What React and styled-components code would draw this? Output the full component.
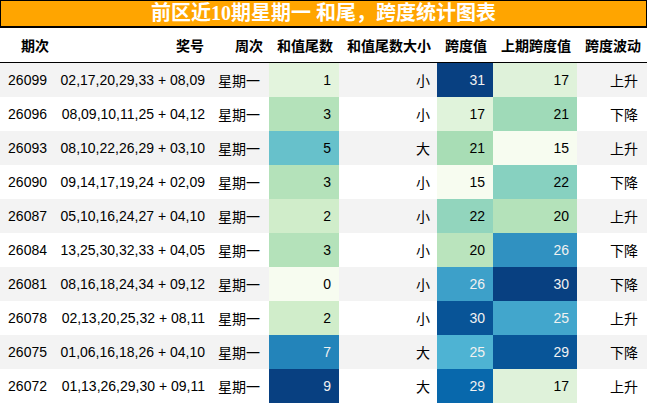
import React from "react";
import styled, { createGlobalStyle } from "styled-components";

const GlobalStyle = createGlobalStyle`
  body {
    margin: 0;
    background: #ffffff;
    font-family: "Liberation Sans", "Noto Sans CJK SC", sans-serif;
  }
`;

// GnBu colormap stops
const GNBU = [
  "#f7fcf0",
  "#e0f3db",
  "#ccebc5",
  "#a8ddb5",
  "#7bccc4",
  "#4eb3d3",
  "#2b8cbe",
  "#0868ac",
  "#084081",
];

const hexToRgb = (h) => [1, 3, 5].map((i) => parseInt(h.slice(i, i + 2), 16));

const gradient = (t) => {
  const x = Math.max(0, Math.min(1, t)) * (GNBU.length - 1);
  const i = Math.min(Math.floor(x), GNBU.length - 2);
  const f = x - i;
  const a = hexToRgb(GNBU[i]);
  const b = hexToRgb(GNBU[i + 1]);
  return a.map((v, k) => Math.round(v + (b[k] - v) * f));
};

const luminance = ([r, g, b]) => {
  const c = [r, g, b].map((v) => {
    v = v / 255;
    return v <= 0.03928 ? v / 12.92 : Math.pow((v + 0.055) / 1.055, 2.4);
  });
  return 0.2126 * c[0] + 0.7152 * c[1] + 0.0722 * c[2];
};

const cellColors = (value, min, max) => {
  const rgb = gradient((value - min) / (max - min));
  return {
    background: `rgb(${rgb.join(",")})`,
    color: luminance(rgb) < 0.408 ? "#f1f1f1" : "#000000",
  };
};

const rows = [
  ["26099", "02,17,20,29,33 + 08,09", 1, "小", 31, 17, "上升"],
  ["26096", "08,09,10,11,25 + 04,12", 3, "小", 17, 21, "下降"],
  ["26093", "08,10,22,26,29 + 03,10", 5, "大", 21, 15, "上升"],
  ["26090", "09,14,17,19,24 + 02,09", 3, "小", 15, 22, "下降"],
  ["26087", "05,10,16,24,27 + 04,10", 2, "小", 22, 20, "上升"],
  ["26084", "13,25,30,32,33 + 04,05", 3, "小", 20, 26, "下降"],
  ["26081", "08,16,18,24,34 + 09,12", 0, "小", 26, 30, "下降"],
  ["26078", "02,13,20,25,32 + 08,11", 2, "小", 30, 25, "上升"],
  ["26075", "01,06,16,18,26 + 04,10", 7, "大", 25, 29, "下降"],
  ["26072", "01,13,26,29,30 + 09,11", 9, "大", 29, 17, "上升"],
];

const headers = ["期次", "奖号", "周次", "和值尾数", "和值尾数大小", "跨度值", "上期跨度值", "跨度波动"];
const widths = [55, 155, 59, 70, 98, 56, 84, 70];

const range = (idx) => {
  const vals = rows.map((r) => r[idx]);
  return [Math.min(...vals), Math.max(...vals)];
};

const Wrapper = styled.div`
  width: 647px;
`;

const Title = styled.div`
  height: 25px;
  border: 1px solid #000;
  border-bottom-width: 2px;
  background: #ffa500;
  color: #ffffff;
  font-family: "Liberation Serif", "Noto Sans CJK SC", serif;
  font-weight: bold;
  font-size: 20px;
  line-height: 25px;
  text-align: center;
  white-space: nowrap;
`;

const Table = styled.table`
  border-collapse: collapse;
  table-layout: fixed;
  width: 647px;
  font-size: 14px;
  color: #000;
`;

const HeadCell = styled.th`
  height: 34px;
  padding: 0 6px 0 0;
  text-align: right;
  font-weight: bold;
  font-size: 14px;
  border-bottom: 1px solid #000;
  white-space: nowrap;
`;

const Row = styled.tr`
  background: ${(p) => (p.$odd ? "#ffffff" : "#f3f3f3")};
`;

const Cell = styled.td`
  height: 34px;
  padding: 0 ${(p) => (p.$pad ? p.$pad : 7)}px 0 0;
  text-align: right;
  white-space: nowrap;
`;

export default function App() {
  const r4 = range(2);
  const r6 = range(4);
  const r7 = range(5);
  return (
    <Wrapper>
      <GlobalStyle />
      <Title>前区近10期星期一 和尾，跨度统计图表</Title>
      <Table>
        <colgroup>
          {widths.map((w, i) => (
            <col key={i} style={{ width: w }} />
          ))}
        </colgroup>
        <thead>
          <tr>
            {headers.map((h) => (
              <HeadCell key={h}>{h}</HeadCell>
            ))}
          </tr>
        </thead>
        <tbody>
          {rows.map((r, i) => (
            <Row key={r[0]} $odd={i % 2 === 1}>
              <Cell $pad={8}>{r[0]}</Cell>
              <Cell $pad={5}>{r[1]}</Cell>
              <Cell $pad={9}>星期一</Cell>
              <Cell $pad={8} style={cellColors(r[2], r4[0], r4[1])}>{r[2]}</Cell>
              <Cell $pad={7}>{r[3]}</Cell>
              <Cell $pad={8} style={cellColors(r[4], r6[0], r6[1])}>{r[4]}</Cell>
              <Cell $pad={8} style={cellColors(r[5], r7[0], r7[1])}>{r[5]}</Cell>
              <Cell $pad={9}>{r[6]}</Cell>
            </Row>
          ))}
        </tbody>
      </Table>
    </Wrapper>
  );
}
